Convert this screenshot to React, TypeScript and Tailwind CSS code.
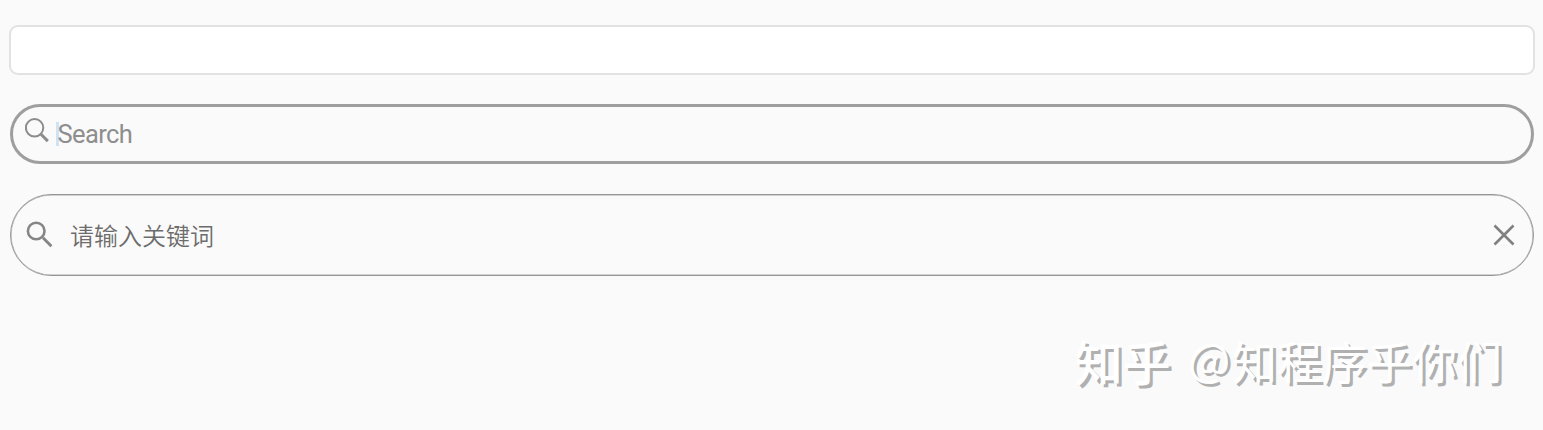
function SearchBar() {
  return (
    <div className="flex h-[60px] rounded-full border-3 border-[#9e9e9e] pl-3">
      <svg className="mt-[11px] h-7 w-7 shrink-0" viewBox="0 0 28 28" fill="none" stroke="#8c8c8c">
        <circle cx="9.6" cy="9.8" r="8.7" strokeWidth="2" />
        <path d="M16 16.3L22.8 23.1" strokeWidth="3" />
      </svg>
      <span className="mt-[15px] ml-[3px] h-6 w-[3px] bg-[#cfe3f3]" />
      <span className="-ml-[1.5px] font-['Roboto',sans-serif] text-[25.5px] leading-[54px] tracking-[-0.6px] text-[#8e8e8e]">
        Search
      </span>
    </div>
  );
}

function KeywordBar() {
  return (
    <div className="flex h-[82px] items-center justify-between rounded-full border border-[#979797] pr-[18px] pl-[15px] shadow-[inset_0_0_0_0.5px_#a8a8a8]">
      <div className="flex items-center">
        <svg className="h-7 w-7" viewBox="0 0 28 28" fill="none" stroke="#868686">
          <circle cx="10.2" cy="10" r="8.3" strokeWidth="2.6" />
          <path d="M17 16.8L25.4 25.2" strokeWidth="3" />
        </svg>
        <span className="ml-4 font-['Noto_Sans_CJK_SC',sans-serif] text-2xl font-[350] text-[#6c6c6c]">
          请输入关键词
        </span>
      </div>
      <svg className="h-[22px] w-[22px]" viewBox="0 0 22 22" fill="none" stroke="#808080" strokeWidth="2.6">
        <path d="M1.5 1.5l19 19M20.5 1.5l-19 19" />
      </svg>
    </div>
  );
}

export default function App() {
  return (
    <div className="flex h-[430px] w-full flex-col bg-[#fafafa] pt-[25px] pr-[9px] pl-2.5">
      <div className="-mr-px -ml-px h-[50px] shrink-0 rounded-[9px] border-2 border-[#e2e2e2] bg-white" />
      <div className="mt-[29px] shrink-0">
        <SearchBar />
      </div>
      <div className="mt-[30px] shrink-0">
        <KeywordBar />
      </div>
      <div className="mt-[50px] mr-8 flex justify-end font-['Noto_Sans_CJK_SC',sans-serif] whitespace-nowrap text-white [text-shadow:3px_3px_0_#b0b0b0]">
        <span className="mr-[17px] text-[48px] leading-[68px] font-medium">知乎</span>
        <span className="mr-0.5 text-[44.5px] leading-[62px]">@</span>
        <span className="text-[45px] leading-[70px]">知程序乎你们</span>
      </div>
    </div>
  );
}
